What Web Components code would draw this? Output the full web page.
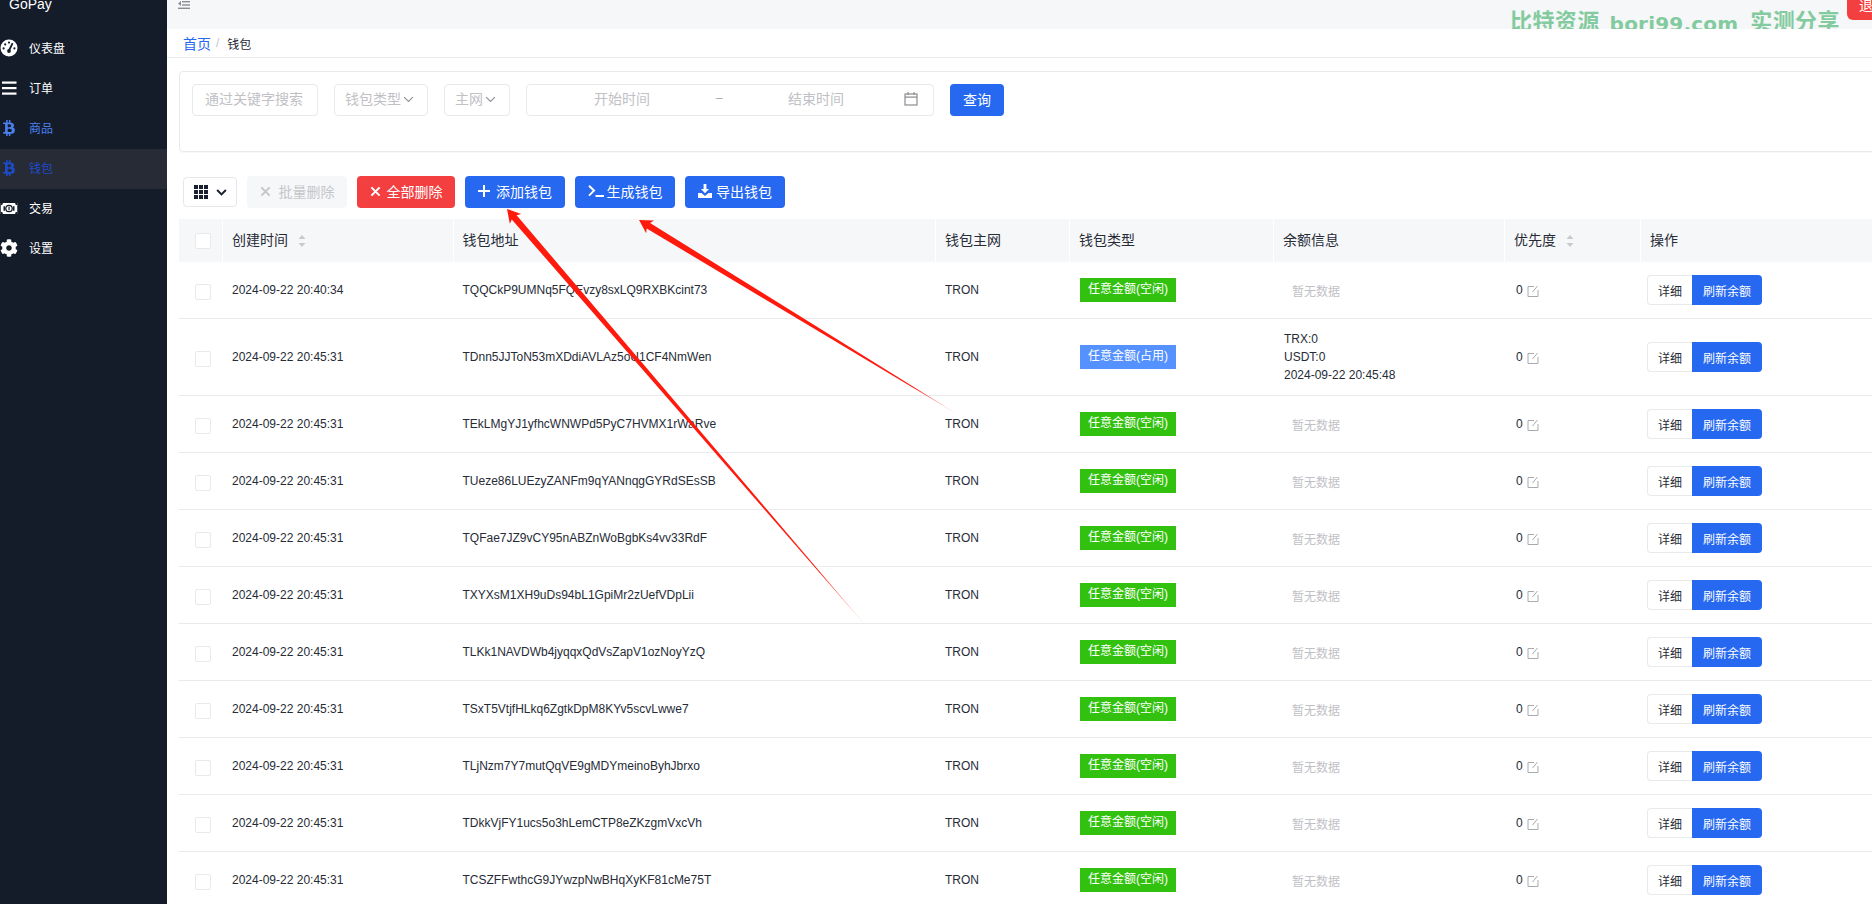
<!DOCTYPE html>
<html lang="zh">
<head>
<meta charset="utf-8">
<title>GoPay</title>
<style>
  html,body{margin:0;height:904px;overflow:hidden;background:#fff;}
  body{font:12px "Liberation Sans","Noto Sans CJK SC",sans-serif;color:#1f2937;}
</style>
</head>
<body>
<gp-app></gp-app>
<script>
const btc = `<svg viewBox="0 0 384 512" width="12" height="16" fill="currentColor"><path d="M310.204 242.638c27.73-14.18 45.377-39.39 41.28-81.3-5.358-57.351-52.458-76.573-114.85-81.929V0h-48.528v77.203c-12.605 0-25.525.315-38.444.63V0h-48.528v79.409c-17.842.539-38.622.276-97.37 0v51.678c38.314-.678 58.417-3.14 63.023 21.427v217.429c-2.925 19.492-18.524 16.685-53.255 16.071L3.765 443.68c88.481 0 97.37.315 97.37.315V512h48.528v-67.06c13.234.315 26.154.315 38.444.315V512h48.528v-68.005c81.299-4.412 135.647-24.894 142.895-101.467 5.671-61.446-23.32-88.862-69.326-99.89zM150.608 134.553c27.415 0 113.126-8.507 113.126 48.528 0 54.515-85.71 48.212-113.126 48.212v-96.74zm0 251.776V279.821c32.772 0 133.127-9.138 133.127 53.255-.001 60.186-100.355 53.253-133.127 53.253z"/></svg>`
const icons = {
  gauge: `<svg viewBox="0 0 18 18" width="18" height="18"><circle cx="9" cy="9" r="8.5" fill="#fff"/><path d="M9 11.5 12.6 4.2" stroke="#141b29" stroke-width="1.8"/><circle cx="9" cy="12" r="1.9" fill="#141b29"/><g fill="#141b29"><circle cx="3.6" cy="9.4" r="1.1"/><circle cx="5.2" cy="5.4" r="1.1"/><circle cx="9" cy="3.6" r="1.1"/><circle cx="14.4" cy="9.4" r="1.1"/></g></svg>`,
  bars: `<svg viewBox="0 0 18 18" width="18" height="18" fill="#fff"><rect x="2" y="2.5" width="14.5" height="2.2"/><rect x="2" y="8" width="14.5" height="2.2"/><rect x="2" y="13.5" width="14.5" height="2.2"/></svg>`,
  btc,
  money: `<svg viewBox="0 0 18 12" width="18" height="11"><rect width="18" height="12" fill="#fff"/><circle cx="9" cy="6" r="4.2" fill="#141b29"/><circle cx="9" cy="6" r="2.8" fill="#fff"/><rect x="8.4" y="4" width="1.3" height="4" fill="#141b29"/><path d="M0 0h2.4A2.4 2.4 0 0 1 0 2.4zM18 0h-2.4A2.4 2.4 0 0 0 18 2.4zM0 12h2.4A2.4 2.4 0 0 0 0 9.600zM18 12h-2.4a2.4 2.4 0 0 1 2.400-2.400z" fill="#141b29"/><path d="M3 3.500h1.600v5H3zM13.400 3.500H15v5h-1.600z" fill="#141b29"/></svg>`,
  cog: `<svg viewBox="0 0 512 512" width="18" height="18" fill="#fff"><path d="M487.4 315.7l-42.6-24.6c4.3-23.2 4.3-47 0-70.2l42.6-24.6c4.9-2.8 7.1-8.6 5.5-14-11.1-35.6-30-67.8-54.7-94.6-3.8-4.1-10-5.1-14.8-2.3L380.8 110c-17.9-15.4-38.5-27.3-60.8-35.1V25.8c0-5.6-3.9-10.5-9.4-11.7-36.7-8.2-74.3-7.8-109.2 0-5.5 1.2-9.4 6.1-9.4 11.7V75c-22.2 7.9-42.8 19.8-60.8 35.1L88.7 85.5c-4.9-2.8-11-1.9-14.8 2.3-24.7 26.7-43.6 58.9-54.7 94.6-1.7 5.4.6 11.2 5.5 14L67.3 221c-4.3 23.2-4.3 47 0 70.2l-42.6 24.6c-4.9 2.8-7.1 8.6-5.5 14 11.1 35.6 30 67.8 54.7 94.6 3.8 4.1 10 5.1 14.8 2.3l42.6-24.6c17.9 15.4 38.5 27.3 60.8 35.1v49.2c0 5.6 3.9 10.5 9.4 11.7 36.7 8.2 74.3 7.8 109.2 0 5.5-1.2 9.4-6.1 9.4-11.7v-49.2c22.2-7.9 42.8-19.8 60.8-35.1l42.6 24.6c4.9 2.8 11 1.9 14.8-2.3 24.7-26.7 43.6-58.9 54.7-94.6 1.5-5.5-.7-11.3-5.6-14.1zM256 336c-44.1 0-80-35.9-80-80s35.9-80 80-80 80 35.9 80 80-35.9 80-80 80z"/></svg>`,
  chevron: `<svg viewBox="0 0 12 8" width="11" height="7" fill="none" stroke="currentColor" stroke-width="1.3"><path d="M1 1.200 6 6.200l5-5"/></svg>`,
  times: `<svg viewBox="0 0 12 12" width="11" height="11" fill="none" stroke="currentColor" stroke-width="2.200"><path d="M1.500 1.500l9 9M10.500 1.500l-9 9"/></svg>`,
  plus: `<svg viewBox="0 0 12 12" width="12" height="12" fill="currentColor"><rect x="5" y="0" width="2" height="12"/><rect x="0" y="5" width="12" height="2"/></svg>`,
  terminal: `<svg viewBox="0 0 16 12" width="16" height="12" fill="none" stroke="currentColor" stroke-width="2"><path d="M1 .8 6 5.600 1 10.600M7.500 11H16" /></svg>`,
  download: `<svg viewBox="0 0 14 14" width="14" height="14" fill="currentColor"><path d="M5.600 0h2.800v5H11L7 9.200 3 5h2.600z"/><path d="M0 9h3.400L7 12l3.600-3H14v5H0z"/></svg>`
}

class GpSidebar extends HTMLElement {
  constructor() {
    super()
    this.attachShadow({ mode: 'open' })
    let items = [
      ["gauge", "仪表盘", ""], ["bars", "订单", ""], ["btc", "商品", "link"],
      ["btc", "钱包", "active"], ["money", "交易", ""], ["cog", "设置", ""]
    ]
    this.shadowRoot.innerHTML = `
      <style>
        :host{display:block;width:167px;flex:none;background:#141b29;color:#fff;height:904px;}
        #logo{height:29px;line-height:9px;padding-left:9px;font-size:14px;overflow:hidden;}
        .item{display:flex;align-items:center;height:40px;font-size:12px;}
        .icon{width:18px;margin:0 11px 2px 0;display:flex;justify-content:center;flex:none;}
        .text{padding-bottom:3px;}
        .link{color:#4b7fee;}
        .active{color:#1d4ccb;background:#272b35;}
      </style>
      <div id="logo">GoPay</div>
      ${items.map(i => `<div class="item ${i[2]}"><span class="icon">${icons[i[0]]}</span><span class="text">${i[1]}</span></div>`).join("")}
    `
  }
}

class GpTopbar extends HTMLElement {
  constructor() {
    super()
    this.attachShadow({ mode: 'open' })
    this.shadowRoot.innerHTML = `
      <style>
        :host{display:block;height:29px;background:#f6f7f9;position:relative;overflow:hidden;}
        #toggle{display:block;margin-left:11px;padding-top:1px;color:#8a8d93;}
        #logout{position:absolute;right:0;top:0;width:13px;height:20px;padding-left:12px;background:#f43f40;color:#fff;
          border-bottom-left-radius:6px;font-size:14px;line-height:12px;overflow:hidden;white-space:nowrap;}
        #mark{position:absolute;left:1343px;top:10px;display:flex;color:#83cb9f;font-weight:700;line-height:24px;white-space:nowrap;}
        #mark span{font-size:22px;letter-spacing:.4px;}
        #mark .en{font:700 20px "DejaVu Sans",sans-serif;line-height:24px;letter-spacing:.2px;margin:2px 12px 0 10px;}
      </style>
      <svg id="toggle" viewBox="0 0 12 8" width="12" height="8" fill="currentColor"><rect x="4" y="0" width="8" height="1.400"/><rect x="4" y="3.300" width="8" height="1.400"/><rect x="0" y="6.600" width="12" height="1.400"/><path d="M3 0v5L0 2.500z"/></svg>
      <div id="mark"><span>比特资源</span><span class="en">bori99.com</span><span>实测分享</span></div>
      <div id="logout">退出</div>
    `
  }
}

class GpBreadcrumb extends HTMLElement {
  constructor() {
    super()
    this.attachShadow({ mode: 'open' })
    this.shadowRoot.innerHTML = `
      <style>
        :host{display:flex;align-items:center;height:28px;padding-left:16px;border-bottom:1px solid #e8e9eb;font-size:12px;}
        a{color:#2668f0;font-size:14px;}
        i{color:#c4c6ca;font-style:normal;margin:0 8px 0 5px;}
      </style>
      <a>首页</a><i>/</i><span>钱包</span>
    `
  }
}

class GpField extends HTMLElement {
  constructor() {
    super()
    this.attachShadow({ mode: 'open' })
    this.shadowRoot.innerHTML = `
      <style>
        :host{display:flex;align-items:center;box-sizing:border-box;height:32px;border:1px solid #e8e9eb;border-radius:4px;
          color:#bfc1c5;font-size:14px;padding:0 10px 4px;white-space:nowrap;}
        :host([select]) svg{display:block;margin:2px 0 0 2px;color:#8f9196;}
        span{display:flex;align-items:center;}
      </style>
      <span><slot></slot></span>
    `
    if (this.hasAttribute("select")) this.shadowRoot.querySelector("span").insertAdjacentHTML("beforeend", icons.chevron)
    this.style.width = this.getAttribute("w") + "px"
  }
}

class GpDateRange extends HTMLElement {
  constructor() {
    super()
    this.attachShadow({ mode: 'open' })
    this.shadowRoot.innerHTML = `
      <style>
        :host{display:block;box-sizing:border-box;width:408px;height:32px;border:1px solid #e8e9eb;border-radius:4px;
          color:#bfc1c5;font-size:14px;}
        #row{display:grid;grid-template-columns:67px 56px 66px 12px 60px 56px 1fr 14px 15px;align-items:center;height:26px;}
        #row > *:nth-child(1){grid-column:2;}
        #row > *:nth-child(2){grid-column:4;font-size:12px;color:#aaa;}
        #row > *:nth-child(3){grid-column:6;}
        #row > *:nth-child(4){grid-column:8;color:#8a8d93;margin-top:1px;}
        svg{display:block;}
      </style>
      <div id="row">
        <span>开始时间</span><span>–</span><span>结束时间</span>
        <svg viewBox="0 0 14 14" width="14" height="14" fill="none" stroke="currentColor" stroke-width="1.200"><rect x="1" y="2" width="12" height="11"/><path d="M1 5.200h12M4 0v3M10 0v3"/></svg>
      </div>
    `
  }
}

class GpButton extends HTMLElement {
  constructor() {
    super()
    this.attachShadow({ mode: 'open' })
    let icon = icons[this.getAttribute("icon")] || ""
    this.shadowRoot.innerHTML = `
      <style>
        :host{display:flex;align-items:center;justify-content:center;gap:var(--gap,4px);box-sizing:border-box;height:32px;border-radius:4px;
          background:#2668f0;color:#fff;font-size:14px;white-space:nowrap;padding-bottom:2px;}
        :host([kind=red]){background:#f43f40;}
        :host([kind=off]){background:#f6f7f9;color:#c4c6ca;}
        svg{display:block;flex:none;}
      </style>
      ${icon}<slot></slot>
    `
    this.style.width = this.getAttribute("w") + "px"
  }
}

class GpFilter extends HTMLElement {
  constructor() {
    super()
    this.attachShadow({ mode: 'open' })
    this.shadowRoot.innerHTML = `
      <style>
        :host{display:flex;gap:16px;box-sizing:border-box;height:81px;margin:13px -20px 0 12px;padding:12px;
          border:1px solid #e8e9eb;border-radius:4px;box-shadow:0 1px 1px rgba(0,0,0,.03);}
      </style>
      <gp-field w="126" style="padding-left:12px">通过关键字搜索</gp-field>
      <gp-field w="94" select>钱包类型</gp-field>
      <gp-field w="66" select>主网</gp-field>
      <gp-date-range></gp-date-range>
      <gp-button w="54">查询</gp-button>
    `
  }
}

class GpToolbar extends HTMLElement {
  constructor() {
    super()
    this.attachShadow({ mode: 'open' })
    let grid = ""
    for (let y = 0; y < 3; y++) for (let x = 0; x < 3; x++) grid += `<rect x="${x * 5}" y="${y * 5}" width="4" height="4"/>`
    this.shadowRoot.innerHTML = `
      <style>
        :host{display:flex;gap:10px;align-items:center;margin:24px 0 11px 16px;}
        #cols{display:flex;align-items:center;gap:8px;box-sizing:border-box;width:54px;height:30px;padding-left:10px;
          border:1px solid #e5e7eb;border-radius:4px;color:#1a2030;}
        #cols svg{display:block;}
        #cols span{display:flex;}
        #cols span svg{stroke-width:2.200;}
      </style>
      <div id="cols">
        <svg viewBox="0 0 14 14" width="14" height="14" fill="#1a2030">${grid}</svg>
        <span>${icons.chevron}</span>
      </div>
      <gp-button w="100" kind="off" icon="times" style="--gap:8px">批量删除</gp-button>
      <gp-button w="98" kind="red" icon="times" style="--gap:6px">全部删除</gp-button>
      <gp-button w="100" icon="plus" style="--gap:6px">添加钱包</gp-button>
      <gp-button w="100" icon="terminal" style="--gap:3px">生成钱包</gp-button>
      <gp-button w="100" icon="download" style="--gap:4px">导出钱包</gp-button>
    `
  }
}

class GpRow extends HTMLElement {
  constructor() {
    super()
    this.attachShadow({ mode: 'open' })
  }
  setSpec(spec) {
    let busy = spec.balance
    this.shadowRoot.innerHTML = `
      <style>
        :host{display:grid;grid-template-columns:var(--cols);align-items:center;box-sizing:border-box;height:${busy ? 77 : 57}px;
          border-bottom:1px solid #e9eaec;font-size:12px;color:#262b36;}
        .cell{padding-left:10px;}
        .check{padding-left:16px;}
        .check i{display:block;width:14px;height:14px;border:1px solid #e8e9eb;border-radius:2px;margin-top:3px;}
        .cell.t{padding-left:11px;}
        .tag{display:block;width:96px;height:24px;line-height:22px;text-align:center;color:#fff;background:${busy ? "#5591ff" : "#33c10f"};}
        .none{color:#bfc1c5;padding-left:19px;}
        .lines{line-height:18px;padding-left:11px;}
        .prio{display:flex;align-items:center;gap:4px;padding-left:12px;}
        .prio svg{display:block;color:#a8aaae;margin-top:1px;}
        .ops{display:flex;padding-left:7px;}
        .ops span{display:flex;align-items:center;justify-content:center;box-sizing:border-box;height:30px;}
        .ops .d{width:45px;border:1px solid #e8e9eb;border-right:0;border-radius:4px 0 0 4px;}
        .ops .r{width:70px;background:#2668f0;color:#fff;border-radius:0 4px 4px 0;}
      </style>
      <div class="check"><i></i></div>
      <div class="cell">${spec.time}</div>
      <div class="cell">${spec.addr}</div>
      <div class="cell">TRON</div>
      <div class="cell t"><span class="tag">任意金额(${busy ? "占用" : "空闲"})</span></div>
      ${busy ? `<div class="cell lines">${busy.join("<br>")}</div>` : `<div class="cell none">暂无数据</div>`}
      <div class="cell prio">0 <svg viewBox="0 0 12 12" width="12" height="12" fill="none" stroke="currentColor"><path d="M7 1.500H1v10h10V5M5.500 7 10.500 1"/></svg></div>
      <div class="ops"><span class="d">详细</span><span class="r">刷新余额</span></div>
    `
  }
}

class GpWalletTable extends HTMLElement {
  constructor() {
    super()
    this.attachShadow({ mode: 'open' })
    let sort = `<svg viewBox="0 0 8 12" width="8" height="12" fill="#c8cacd"><path d="M4 0 7.500 4H.500zM4 12 .500 8h7z"/></svg>`
    let heads = [["", 0], ["创建时间", 1], ["钱包地址", 0], ["钱包主网", 0], ["钱包类型", 0], ["余额信息", 0], ["优先度", 1], ["操作", 0]]
    this.shadowRoot.innerHTML = `
      <style>
        :host{display:block;--cols:43px 230.5px 482.5px 134px 204px 231px 136px 232px;margin-left:12px;}
        #head{display:grid;grid-template-columns:var(--cols);height:43px;}
        .h{display:flex;align-items:center;gap:10px;padding:0 0 4px 9px;background:#f6f7f9;font-size:14px;color:#262b36;border-left:1px solid #fff;}
        .h:first-child{border-left:0;padding:0 0 0 16px;}
        .h svg{display:block;margin-top:4px;}
        .h i{display:block;width:14px;height:14px;border:1px solid #e8e9eb;background:#fff;border-radius:2px;}
      </style>
      <div id="head">
        ${heads.map((h, n) => `<div class="h">${n == 0 ? "<i></i>" : h[0]}${h[1] ? sort : ""}</div>`).join("")}
      </div>
      <div id="rows"></div>
    `
    let data = [
      ["2024-09-22 20:40:34", "TQQCkP9UMNq5FQEvzy8sxLQ9RXBKcint73"],
      ["2024-09-22 20:45:31", "TDnn5JJToN53mXDdiAVLAz5oU1CF4NmWen", ["TRX:0", "USDT:0", "2024-09-22 20:45:48"]],
      ["2024-09-22 20:45:31", "TEkLMgYJ1yfhcWNWPd5PyC7HVMX1rWaRve"],
      ["2024-09-22 20:45:31", "TUeze86LUEzyZANFm9qYANnqgGYRdSEsSB"],
      ["2024-09-22 20:45:31", "TQFae7JZ9vCY95nABZnWoBgbKs4vv33RdF"],
      ["2024-09-22 20:45:31", "TXYXsM1XH9uDs94bL1GpiMr2zUefVDpLii"],
      ["2024-09-22 20:45:31", "TLKk1NAVDWb4jyqqxQdVsZapV1ozNoyYzQ"],
      ["2024-09-22 20:45:31", "TSxT5VtjfHLkq6ZgtkDpM8KYv5scvLwwe7"],
      ["2024-09-22 20:45:31", "TLjNzm7Y7mutQqVE9gMDYmeinoByhJbrxo"],
      ["2024-09-22 20:45:31", "TDkkVjFY1ucs5o3hLemCTP8eZKzgmVxcVh"],
      ["2024-09-22 20:45:31", "TCSZFFwthcG9JYwzpNwBHqXyKF81cMe75T"]
    ]
    for (let d of data) {
      let row = document.createElement("gp-row")
      row.setSpec({ time: d[0], addr: d[1], balance: d[2] })
      this.shadowRoot.getElementById("rows").appendChild(row)
    }
  }
}

// the two red annotation arrows drawn over the page
class GpArrows extends HTMLElement {
  constructor() {
    super()
    this.attachShadow({ mode: 'open' })
    let arrows = [[507, 209, 872, 633], [639, 220, 962, 417]]
    this.shadowRoot.innerHTML = `
      <style>
        :host{position:absolute;left:0;top:0;width:1872px;height:904px;pointer-events:none;}
        svg{display:block;}
      </style>
      <svg width="1872" height="904" viewBox="0 0 1872 904">
        <defs>${arrows.map((a, n) => `<linearGradient id="fade${n}" gradientUnits="userSpaceOnUse" x1="${a[0]}" y1="${a[1]}" x2="${a[2]}" y2="${a[3]}">
          <stop offset="0" stop-color="#ff1a0e"/><stop offset=".85" stop-color="#ff1a0e"/><stop offset="1" stop-color="#ff1a0e" stop-opacity="0"/></linearGradient>`).join("")}</defs>
        ${arrows.map((a, n) => `<polygon fill="url(#fade${n})" points="${this.points(a)}"/>`).join("")}
      </svg>
    `
  }
  points([x, y, x2, y2]) {
    let len = Math.hypot(x2 - x, y2 - y), ux = (x2 - x) / len, uy = (y2 - y) / len, px = uy, py = -ux
    let at = (along, side) => `${(x + ux * along + px * side).toFixed(1)},${(y + uy * along + py * side).toFixed(1)}`
    return [at(0, 0), at(13, 7.5), at(11, 3.2), at(len, 0), at(11, -3.2), at(13, -7.5)].join(" ")
  }
}

class GpApp extends HTMLElement {
  constructor() {
    super()
    this.attachShadow({ mode: 'open' })
    this.shadowRoot.innerHTML = `
      <style>
        :host{display:flex;height:904px;overflow:hidden;position:relative;}
        main{flex:1;min-width:0;overflow:hidden;}
      </style>
      <gp-sidebar></gp-sidebar>
      <main>
        <gp-topbar></gp-topbar>
        <gp-breadcrumb></gp-breadcrumb>
        <gp-filter></gp-filter>
        <gp-toolbar></gp-toolbar>
        <gp-wallet-table></gp-wallet-table>
      </main>
      <gp-arrows></gp-arrows>
    `
  }
}

customElements.define("gp-sidebar", GpSidebar)
customElements.define("gp-topbar", GpTopbar)
customElements.define("gp-breadcrumb", GpBreadcrumb)
customElements.define("gp-field", GpField)
customElements.define("gp-date-range", GpDateRange)
customElements.define("gp-button", GpButton)
customElements.define("gp-filter", GpFilter)
customElements.define("gp-toolbar", GpToolbar)
customElements.define("gp-row", GpRow)
customElements.define("gp-wallet-table", GpWalletTable)
customElements.define("gp-arrows", GpArrows)
customElements.define("gp-app", GpApp)
</script>
</body>
</html>
